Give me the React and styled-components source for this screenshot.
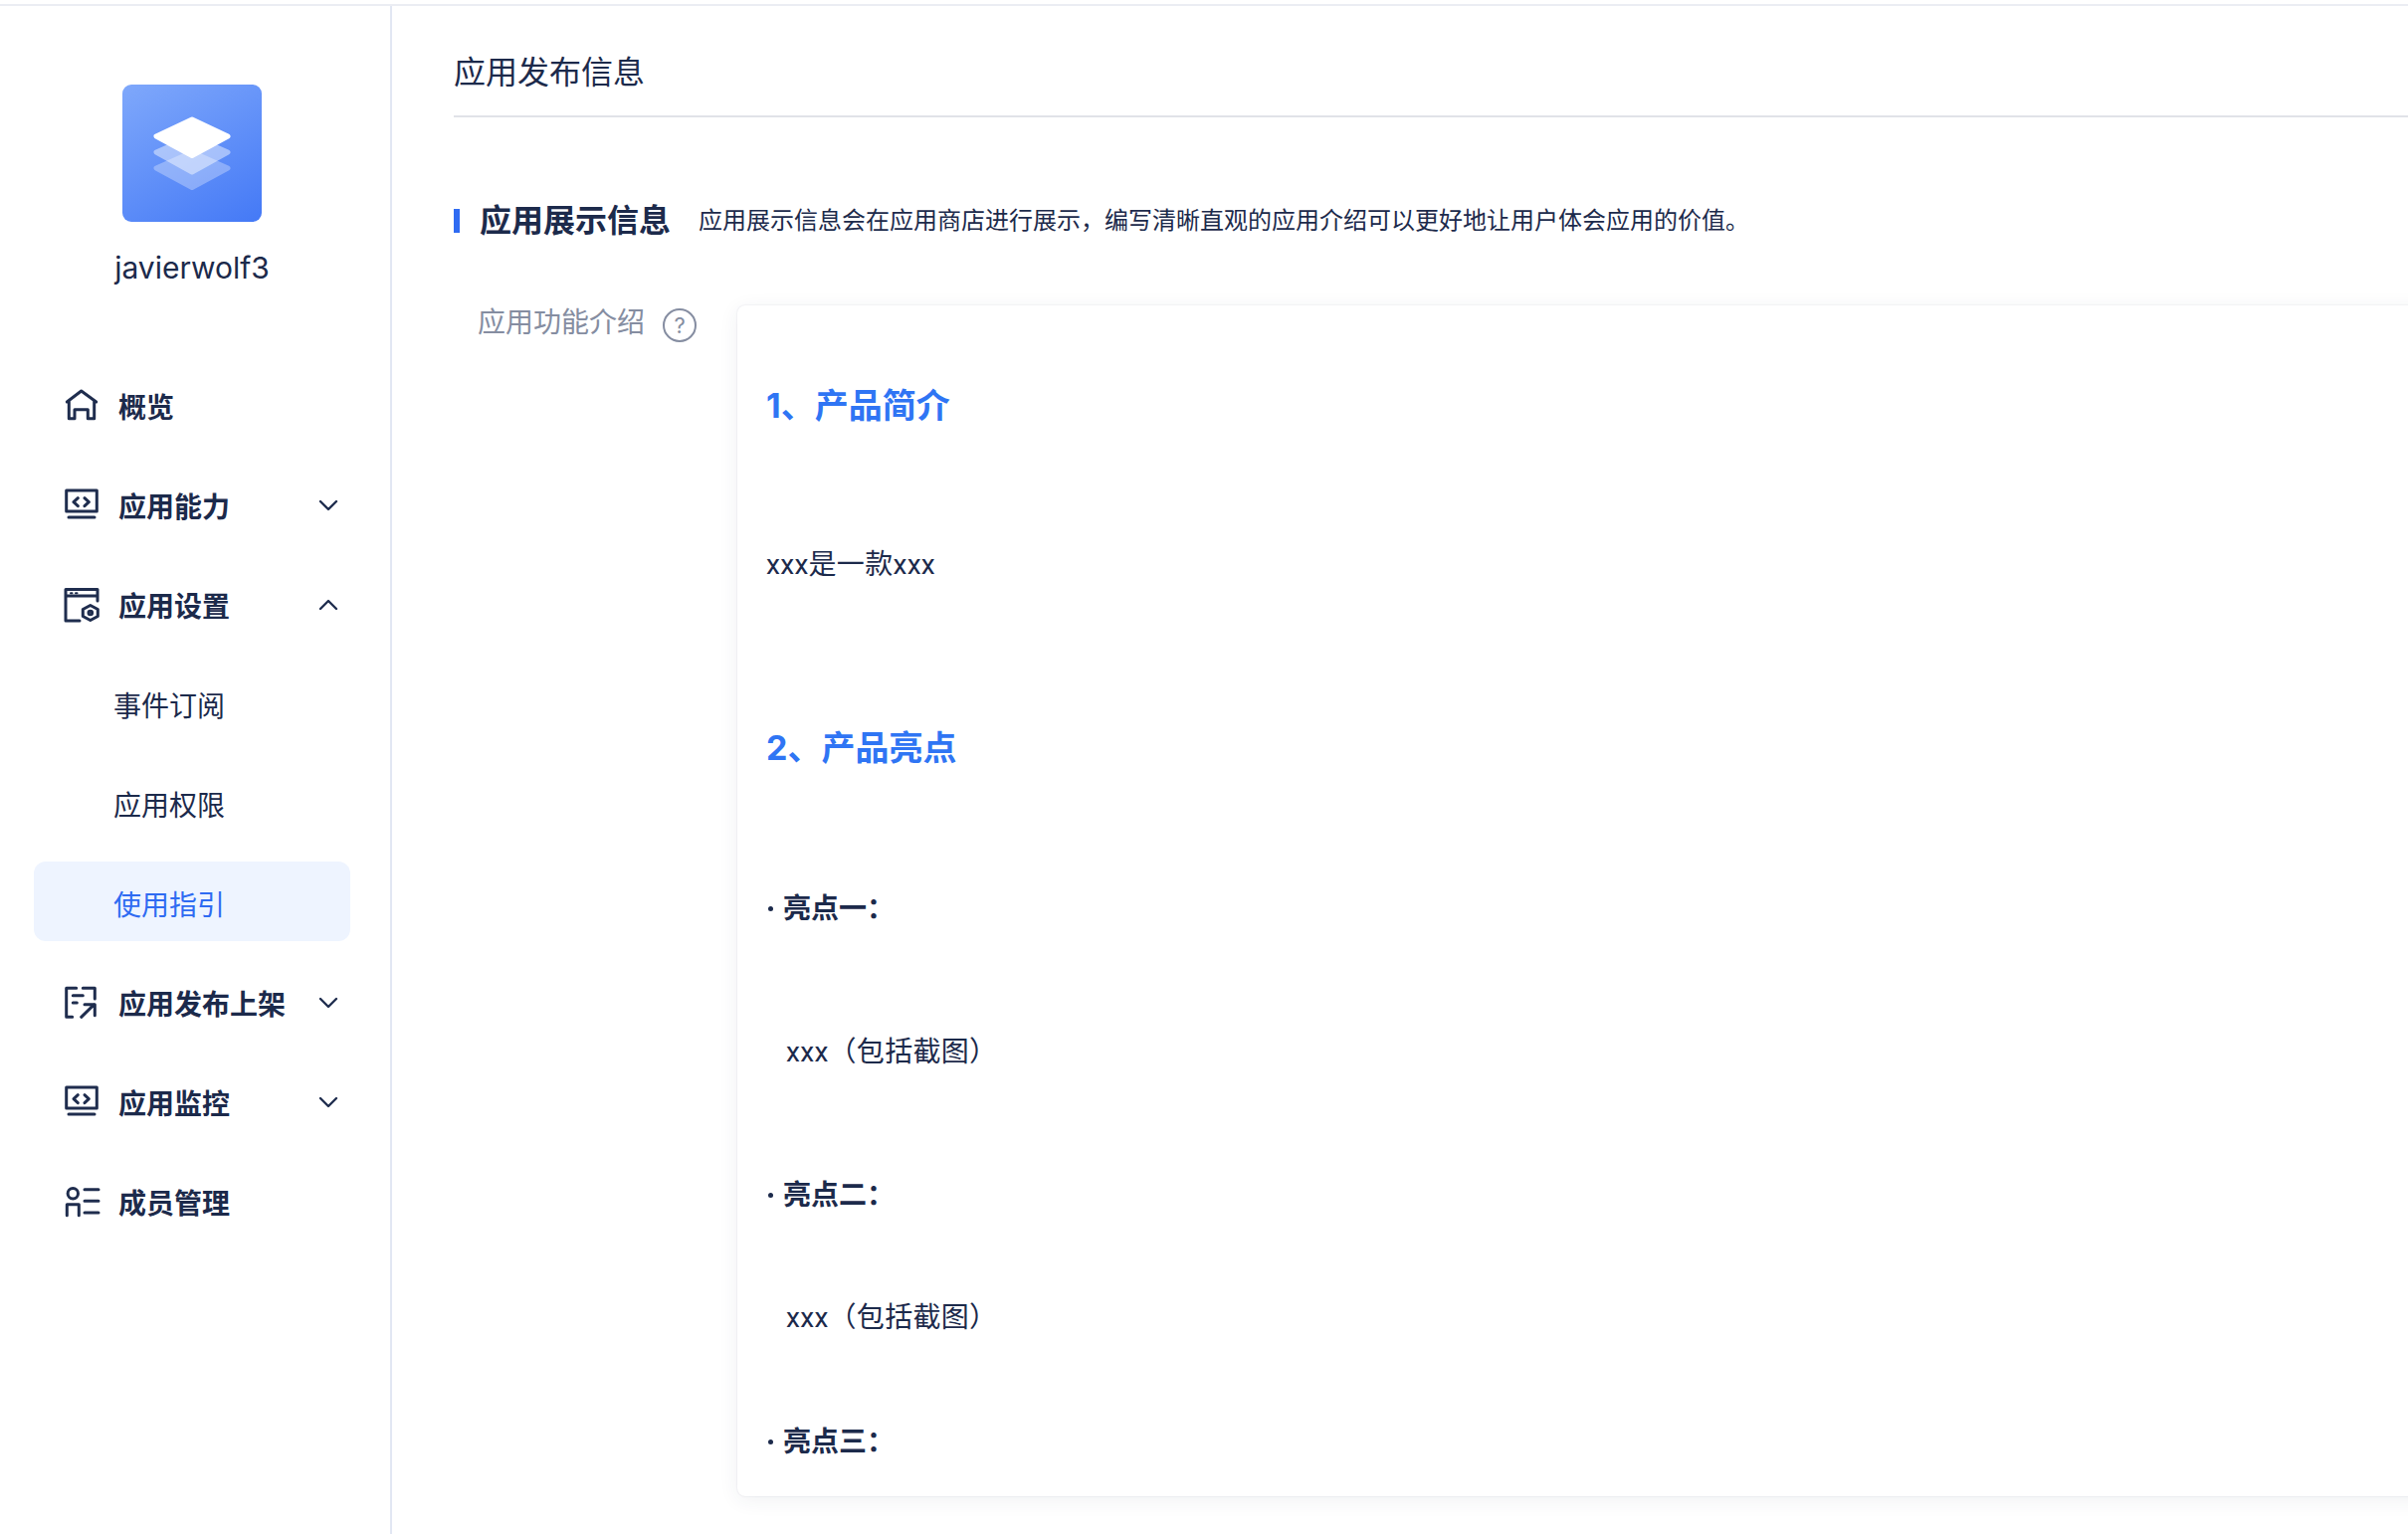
import React from 'react';
import styled, { createGlobalStyle } from 'styled-components';

const Global = createGlobalStyle`
  html, body { margin: 0; padding: 0; background: #fff; }
  body { font-family: Inter, "Noto Sans CJK SC", sans-serif; color: #1c2a4b; overflow: hidden; }
  * { box-sizing: border-box; }
`;

const Page = styled.div`
  width: 2420px; height: 1542px; display: flex; flex-direction: column; overflow: hidden;
`;
const TopLine = styled.div`
  height: 6px; flex: none; border-bottom: 2px solid #ebedf3; background: #fff;
`;
const Body = styled.div`
  flex: 1; display: flex; min-height: 0;
`;
const Sidebar = styled.aside`
  width: 394px; flex: none; border-right: 2px solid #e2e7f3; padding-top: 79px;
  display: flex; flex-direction: column;
`;
const Brand = styled.div`
  display: flex; flex-direction: column; align-items: center; width: 386px;
`;
const LogoBox = styled.div`
  width: 140px; height: 138px; border-radius: 9px;
  background: linear-gradient(150deg, #7fa8fb 0%, #4479f6 100%);
  display: flex; align-items: center; justify-content: center;
`;
const BrandName = styled.div`
  margin-top: 24px; font-size: 30px; line-height: 44px; color: #1c2a4b;
`;
const Nav = styled.nav`
  margin-top: 75px; padding: 0 34px; width: 386px; display: flex; flex-direction: column; gap: 20px;
`;
const NavRow = styled.div`
  height: 80px; display: flex; align-items: center; padding: 4px 12px 0 32px; border-radius: 12px;
  font-size: 28px; font-weight: 700; color: #1c2a4b;
`;
const NavIcon = styled.svg`
  width: 32px; height: 32px; flex: none; margin-right: 21px; overflow: visible;
  fill: none; stroke: #1f2d4e; stroke-width: 3; stroke-linecap: round; stroke-linejoin: round;
`;
const NavLabel = styled.span`
  flex: 1; white-space: nowrap;
`;
const Chevron = styled.svg`
  width: 20px; height: 12px; flex: none; fill: none; stroke: #1f2d4e; stroke-width: 2.4;
  stroke-linecap: round; stroke-linejoin: round;
  transform: ${p => (p.$up ? 'rotate(180deg)' : 'none')};
`;
const SubRow = styled.div`
  height: 80px; display: flex; align-items: center; padding: 4px 0 0 80px; border-radius: 12px;
  font-size: 28px; font-weight: 400;
  color: ${p => (p.$active ? '#2f6bf2' : '#1c2a4b')};
  background: ${p => (p.$active ? '#eef4ff' : 'transparent')};
`;
const Main = styled.main`
  flex: 1; min-width: 0; padding-left: 62px; display: flex; flex-direction: column;
`;
const PageHead = styled.header`
  height: 112px; flex: none; border-bottom: 2px solid #e1e2e8; padding-top: 45px;
  font-size: 32px; line-height: 44px; color: #1c2a4b;
`;
const SectionHead = styled.div`
  margin-top: 82px; display: flex; align-items: center; height: 44px;
`;
const SectionBar = styled.span`
  width: 6px; height: 24px; background: #2f6bf2; flex: none; margin-right: 20px;
`;
const SectionTitle = styled.h2`
  margin: 0; font-size: 32px; font-weight: 700; line-height: 44px; color: #1c2a4b;
`;
const SectionDesc = styled.p`
  margin: 0 0 0 28px; font-size: 24px; line-height: 36px; color: #1c2a4b; white-space: nowrap;
`;
const FormRow = styled.div`
  margin-top: 63px; display: flex; flex: 1; min-height: 0; padding-bottom: 38px;
`;
const FieldLabel = styled.div`
  width: 285px; flex: none; padding: 0 0 0 24px; display: flex; align-items: flex-start; gap: 18px;
  font-size: 28px; line-height: 34px; color: #858da1;
`;
const Help = styled.span`
  width: 34px; height: 34px; margin-top: 3px; border-radius: 50%; border: 2px solid #858da1; flex: none;
  display: flex; align-items: center; justify-content: center;
  font-size: 22px; line-height: 1; color: #858da1;
`;
const Card = styled.section`
  flex: 1; min-width: 0; margin-right: -40px; border-radius: 8px; background: #fff;
  box-shadow: 0 0 2px rgba(40, 50, 90, 0.14), 0 4px 20px rgba(40, 50, 90, 0.07);
  padding: 0 29px; overflow: hidden; display: flex; flex-direction: column;
`;
const Heading = styled.div`
  margin-top: ${p => p.$gap}px; font-size: 34px; font-weight: 700; line-height: 44px; color: #2f75f4;
`;
const Para = styled.div`
  margin-top: ${p => p.$gap}px; font-family: Roboto, "Noto Sans CJK SC", sans-serif;
  font-size: 28px; line-height: 40px; letter-spacing: 0.3px; color: #1c2a4b;
  padding-left: ${p => (p.$indent ? '20px' : '0')};
`;
const Bullet = styled.div`
  margin-top: ${p => p.$gap}px; font-size: 28px; font-weight: 700; line-height: 40px; color: #1c2a4b;
  display: flex; align-items: center; gap: 10px;
  &::before { content: ''; width: 5px; height: 5px; margin-left: 2px; border-radius: 50%; background: #1c2a4b; }
`;

const House = () => (
  <NavIcon viewBox="0 0 32 32">
    <path d="M1.3 12 15.7 1 30.7 12" />
    <path d="M3.3 12V28.7H9V19.7H22.3V28.7H28.7V12" />
  </NavIcon>
);
const CodeScreen = () => (
  <NavIcon viewBox="0 0 32 32">
    <rect x="0.7" y="1" width="30.6" height="21" />
    <path d="M3 28H29M12.3 8.7 8 12.7 12.3 16.7M19 8.7 23.3 12.7 19 16.7" />
  </NavIcon>
);
const WindowGear = () => (
  <NavIcon viewBox="0 0 32 32">
    <path d="M14 32H0V0.500H32V12M0 7H32" />
    <path d="M5 4.200H6.500M10 4.200H11.500" strokeWidth="2" />
    <path d="M24.800 16.500 32.300 20.500V27.500L24.800 31.500 17.300 27.500V20.500Z" />
    <circle cx="24.800" cy="24" r="1.800" />
  </NavIcon>
);
const Publish = () => (
  <NavIcon viewBox="0 0 32 32">
    <path d="M10.700 1.300H0.700V30.300H6.700M17.300 1.300H29.300V12M7.300 8.700H17.300M7.300 16H11.300" />
    <path d="M15.700 30.300 28.700 17.700M19 17.700H29.300V28.700" />
  </NavIcon>
);
const Members = () => (
  <NavIcon viewBox="0 0 32 32">
    <circle cx="7.300" cy="7.700" r="5.200" />
    <path d="M1.300 29.700V18.700H13.300V29.700M19 3.700H33M19 15.300H33M19 27H33" />
  </NavIcon>
);
const Down = ({ up }) => (
  <Chevron viewBox="0 0 20 12" $up={up}><path d="M2 2 10 10 18 2" /></Chevron>
);
const LogoLayer = styled.polygon`
  fill: #fff; stroke: #fff; stroke-width: 5; stroke-linejoin: round;
  opacity: ${p => p.$alpha};
`;
const Logo = () => (
  <svg width="140" height="138" viewBox="0 0 140 138">
    <LogoLayer $alpha={0.3} points="70,68 34,84 70,103.500 106,84" />
    <LogoLayer $alpha={0.45} points="70,52 34,68 70,88 106,68" />
    <LogoLayer $alpha={1} points="70,35 34,52 70,71.500 106,52" />
  </svg>
);

export default function App() {
  return (
    <Page>
      <Global />
      <TopLine />
      <Body>
        <Sidebar>
          <Brand>
            <LogoBox><Logo /></LogoBox>
            <BrandName>javierwolf3</BrandName>
          </Brand>
          <Nav>
            <NavRow><House /><NavLabel>概览</NavLabel></NavRow>
            <NavRow><CodeScreen /><NavLabel>应用能力</NavLabel><Down /></NavRow>
            <NavRow><WindowGear /><NavLabel>应用设置</NavLabel><Down up /></NavRow>
            <SubRow>事件订阅</SubRow>
            <SubRow>应用权限</SubRow>
            <SubRow $active>使用指引</SubRow>
            <NavRow><Publish /><NavLabel>应用发布上架</NavLabel><Down /></NavRow>
            <NavRow><CodeScreen /><NavLabel>应用监控</NavLabel><Down /></NavRow>
            <NavRow><Members /><NavLabel>成员管理</NavLabel></NavRow>
          </Nav>
        </Sidebar>
        <Main>
          <PageHead>应用发布信息</PageHead>
          <SectionHead>
            <SectionBar />
            <SectionTitle>应用展示信息</SectionTitle>
            <SectionDesc>{'应用展示信息会在应用商店进行展示\uFF0C编写清晰直观的应用介绍可以更好地让用户体会应用的价值。'}</SectionDesc>
          </SectionHead>
          <FormRow>
            <FieldLabel>应用功能介绍<Help>?</Help></FieldLabel>
            <Card>
              <Heading $gap={79}>1、产品简介</Heading>
              <Para $gap={118}>xxx是一款xxx</Para>
              <Heading $gap={142}>2、产品亮点</Heading>
              <Bullet $gap={119}>{'亮点一\uFF1A'}</Bullet>
              <Para $indent $gap={105}>{'xxx\uFF08包括截图\uFF09'}</Para>
              <Bullet $gap={103}>{'亮点二\uFF1A'}</Bullet>
              <Para $indent $gap={84}>{'xxx\uFF08包括截图\uFF09'}</Para>
              <Bullet $gap={84}>{'亮点三\uFF1A'}</Bullet>
            </Card>
          </FormRow>
        </Main>
      </Body>
    </Page>
  );
}
